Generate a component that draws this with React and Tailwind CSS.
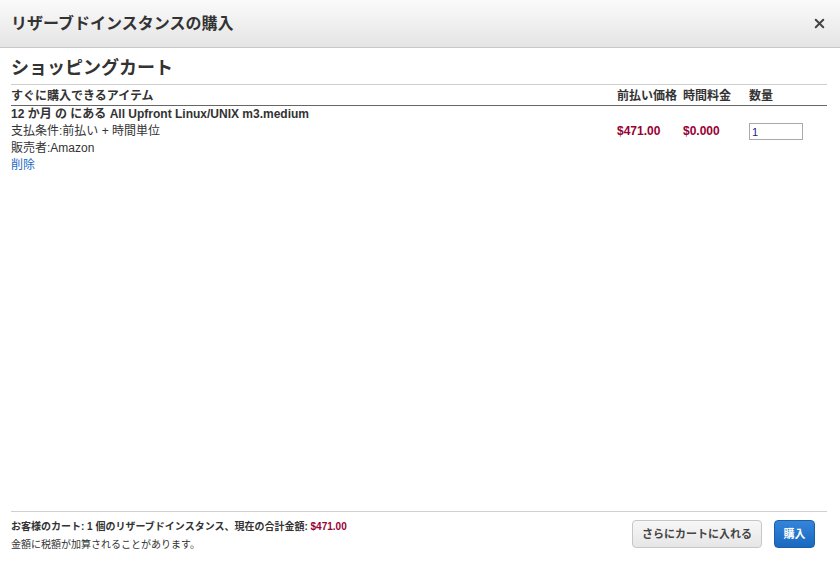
import { X } from "lucide-react";

const font = { fontFamily: '"Liberation Sans", "Noto Sans CJK JP", sans-serif' };

export default function App() {
    return (
        <div className="flex h-[569px] w-[840px] flex-col bg-white text-[#333]" style={font}>
            {/* ヘッダー */}
            <div className="flex h-[48px] shrink-0 items-center justify-between border-b border-[#c8c8c8] bg-gradient-to-b from-[#fbfbfb] to-[#e4e4e4] pl-[11px] pr-[13px]">
                <h1 className="text-[16px] font-bold text-[#333]">リザーブドインスタンスの購入</h1>
                <X size={15} strokeWidth={3.2} className="text-[#444]" />
            </div>

            <div className="flex flex-1 flex-col px-[11px] pr-[13px]">
                <h2 className="border-b border-[#cfcfcf] pb-[4px] pt-[8px] text-[18px] font-bold leading-[24px] text-[#333]">ショッピングカート</h2>

                <div className="flex h-[21px] items-end border-b border-[#666] pb-[1px] text-[12px] font-bold leading-[16px] text-[#333]">
                    <span className="flex-1">すぐに購入できるアイテム</span>
                    <span className="w-[66px]">前払い価格</span>
                    <span className="w-[66px]">時間料金</span>
                    <span className="w-[78px]">数量</span>
                </div>

                <div className="flex text-[12px] leading-[17px]">
                    <div className="flex-1">
                        <div className="font-bold">12 か月 の にある All Upfront Linux/UNIX m3.medium</div>
                        <div>支払条件:前払い + 時間単位</div>
                        <div>販売者:Amazon</div>
                        <a className="text-[#1a6bbf]">削除</a>
                    </div>
                    <div className="w-[66px] pt-[17px] font-bold text-[#990033]">$471.00</div>
                    <div className="w-[66px] pt-[17px] font-bold text-[#990033]">$0.000</div>
                    <div className="w-[78px] pt-[17px]">
                        <input defaultValue="1" className="h-[17px] w-[54px] border border-[#aaa] px-[2px] text-[11px] leading-[15px] text-[#22228a] outline-none" />
                    </div>
                </div>

                <div className="flex-1" />

                <div className="flex items-start justify-between border-t border-[#d0d0d0] pb-[15px] pt-[6px]">
                    <div className="text-[10px] leading-[18px]">
                        <div className="font-bold">お客様のカート: 1 個のリザーブドインスタンス、現在の合計金額: <span className="text-[#990033]">$471.00</span></div>
                        <div>金額に税額が加算されることがあります。</div>
                    </div>
                    <div className="mr-[12px] mt-[2px] flex gap-[12px]">
                        <button className="h-[28px] w-[130px] rounded-[4px] border border-[#c6c6c6] bg-gradient-to-b from-[#f7f7f7] to-[#e6e6e6] text-[11px] font-bold text-[#444]">さらにカートに入れる</button>
                        <button className="h-[28px] w-[41px] rounded-[4px] border border-[#1b5fa8] bg-gradient-to-b from-[#3385da] to-[#1a68c0] text-[11px] font-bold text-white">購入</button>
                    </div>
                </div>
            </div>
        </div>
    );
}
